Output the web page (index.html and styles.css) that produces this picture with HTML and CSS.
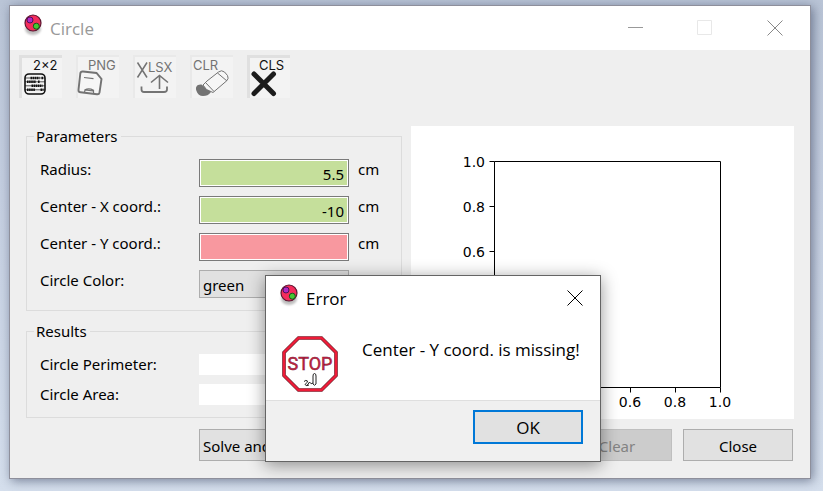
FILE: index.html
```
<!DOCTYPE html>
<html lang="en">
<head>
<meta charset="utf-8">
<title>Circle</title>
<link rel="stylesheet" href="styles.css">
</head>
<body>
<svg class="defs" aria-hidden="true">
  <symbol id="ball" viewBox="0 0 20 24">
    <ellipse class="ball-shadow" cx="10" cy="15" rx="8" ry="6"/>
    <circle cx="10" cy="9" r="8" fill="#f52c5c" stroke="#5c1630" stroke-width="1.2"/>
    <circle cx="7" cy="6" r="3" fill="#b228c4" stroke="#4a1258"/>
    <circle cx="13.300" cy="12.200" r="3" fill="#46c832" stroke="#17551a"/>
  </symbol>
  <symbol id="cross" viewBox="0 0 16 16">
    <path d="M.5.5l15 15M15.500.500l-15 15" fill="none" stroke="currentColor"/>
  </symbol>
</svg>
<main class="window">
  <header class="titlebar">
    <svg class="ball"><use href="#ball"/></svg>
    <h1 class="title">Circle</h1>
    <div class="controls">
      <button class="control" aria-label="Minimize"><svg class="glyph" viewBox="0 0 16 16"><path d="M1 7.500h15" stroke="#999" fill="none"/></svg></button>
      <button class="control" aria-label="Maximize" disabled><svg class="glyph" viewBox="0 0 16 16"><path d="M.5.5h14v14H.5z" stroke="#e8e8e8" fill="none"/></svg></button>
      <button class="control" aria-label="Close window"><svg class="glyph"><use href="#cross"/></svg></button>
    </div>
  </header>

  <nav class="toolbar">
    <button class="tool" aria-label="Solve">
      <svg viewBox="0 0 43 43">
        <text x="14" y="15" class="tool-text">2×2</text>
        <rect x="6" y="19" width="20" height="20" rx="4" fill="none" stroke="#111" stroke-width="1.6"/>
        <path d="M6 23h20M6 26.800h20M6 30.800h20M6 34.800h20" stroke="#111" stroke-width=".7" fill="none"/>
        <path d="M11.500 23h9M22.500 23h2M8 26.800h9M19 26.800h2M12.500 30.800h11M8 34.800h8M21.500 34.800h3" stroke="#111" stroke-width="2.600" stroke-dasharray="1.600 .5" fill="none"/>
      </svg>
    </button>
    <button class="tool" aria-label="Save picture" disabled>
      <svg viewBox="0 0 43 43">
        <text x="12" y="15" class="tool-text">PNG</text>
        <path d="M7 16.500l13.500 1.500 5 6-2 13.500q-.4 2-2.500 1.800L4.500 37.300q-2.200-.3-2-2.500L4.300 18.500q.3-2.200 2.700-2z" fill="#f6f6f6" stroke="currentColor" stroke-width="1.900"/>
        <path d="M8 22.500l9.500 1.200M8.500 37.500l.5-2.800q4-2 8.500.5v3.300M9 35l8 .8" fill="none" stroke="currentColor" stroke-width="1.200"/>
      </svg>
    </button>
    <button class="tool" aria-label="Export spreadsheet" disabled>
      <svg viewBox="0 0 43 43">
        <text x="15" y="17" class="tool-text">LSX</text>
        <path d="M4.500 7.500l9.500 15M14 7.500l-9.500 15" fill="none" stroke="currentColor" stroke-width="1.500"/>
        <path d="M26.500 34V20.500M18 27.500l8.500-7 8.500 7" fill="none" stroke="currentColor" stroke-width="1.600"/>
        <path d="M8.500 31.500v3q0 2.500 2.500 2.500h20q3 0 3-2.500v-3" fill="none" stroke="currentColor" stroke-width="1.800"/>
      </svg>
    </button>
    <button class="tool" aria-label="Clear values" disabled>
      <svg viewBox="0 0 43 43">
        <text x="3" y="15" class="tool-text">CLR</text>
        <path d="M11.500 29.500C7 29 5 32 6.500 36c.8 3 3.500 5 6.500 5 3.500 0 5.500-1 8-4z" fill="currentColor"/>
        <path d="M17 26L28.500 17q3-2.500 6 0l3 3.500q1.600 3-.8 5.300L23 37.500l-6.500-3-3.500-4.500z" fill="#f6f6f6" stroke="currentColor"/>
        <path d="M15.500 27.500l8.500 9M27.500 18l9.500 8" fill="none" stroke="currentColor"/>
      </svg>
    </button>
    <button class="tool" aria-label="Close">
      <svg viewBox="0 0 43 43">
        <text x="12" y="15" class="tool-text">CLS</text>
        <path d="M7 19l19.500 19.500M26.500 19L7 38.500" fill="none" stroke="#1c1c1c" stroke-width="5" stroke-linecap="round"/>
      </svg>
    </button>
  </nav>

  <div class="content">
    <div class="forms">
      <fieldset class="group">
        <legend>Parameters</legend>
        <div class="rows">
          <label for="radius">Radius:</label><input id="radius" class="field" value="5.5"><span>cm</span>
          <label for="cx">Center - X coord.:</label><input id="cx" class="field" value="-10"><span>cm</span>
          <label for="cy">Center - Y coord.:</label><input id="cy" class="field field-missing"><span>cm</span>
          <label for="color">Circle Color:</label><select id="color" class="choice"><option>green</option></select><span></span>
        </div>
      </fieldset>
      <fieldset class="group">
        <legend>Results</legend>
        <div class="rows">
          <label for="perimeter">Circle Perimeter:</label><output id="perimeter" class="result"></output><span></span>
          <label for="area">Circle Area:</label><output id="area" class="result"></output><span></span>
        </div>
      </fieldset>
    </div>
    <svg class="chart" viewBox="0 0 383 293" role="img" aria-label="Empty plot">
      <path d="M83.500 35.500h226v226h-226zM78.500 35.500h5M78.500 80.500h5M78.500 125.500h5M78.500 171.500h5M78.500 216.500h5M78.500 261.500h5M83.500 261.500v5M128.500 261.500v5M173.500 261.500v5M219.500 261.500v5M264.500 261.500v5M309.500 261.500v5" fill="none" stroke="#000"/>
      <g text-anchor="end">
        <text x="74" y="41">1.0</text><text x="74" y="86">0.8</text><text x="74" y="131">0.6</text>
      </g>
      <g text-anchor="middle">
        <text x="219" y="281">0.6</text><text x="264" y="281">0.8</text><text x="309" y="281">1.0</text>
      </g>
    </svg>
  </div>

  <footer class="actions">
    <button class="button button-solve">Solve and</button>
    <button class="button button-clear" disabled>Clear</button>
    <button class="button">Close</button>
  </footer>

  <section class="dialog" role="dialog" aria-labelledby="dialog-title">
    <header class="dialog-bar">
      <svg class="ball"><use href="#ball"/></svg>
      <h2 class="title" id="dialog-title">Error</h2>
      <button class="dialog-close" aria-label="Close dialog"><svg class="glyph"><use href="#cross"/></svg></button>
    </header>
    <div class="dialog-body">
      <svg class="stop" viewBox="0 0 56 56" aria-hidden="true">
        <path d="M16.500 2h23L54 16.500v23L39.500 54h-23L2 39.500v-23z" fill="#fff" stroke="#6a2630" stroke-width="3.600"/>
        <path d="M16.500 2h23L54 16.500v23L39.500 54h-23L2 39.500v-23z" fill="none" stroke="#ee1c38" stroke-width="2.400"/>
        <text x="28" y="34" text-anchor="middle" class="stop-text">STOP</text>
        <path d="M31 48V40q0-2.500 1.500-2.500T34 40v8q-1.500 2.500-3 0zM31 47q-2 2-3.500-1-1.500 3-3 3.500M22 45.500q2-2 3.500-.5 0 1.500-2.500 3.500 1.500 2 4 .5" fill="none" stroke="#222"/>
      </svg>
      <p class="message">Center - Y coord. is missing!</p>
    </div>
    <footer class="dialog-footer"><button class="ok">OK</button></footer>
  </section>
</main>
</body>
</html>
```
FILE: styles.css
```
* { box-sizing: border-box; }

body {
  display: flex;
  min-height: 100vh;
  margin: 0;
  padding: 5px 12px 12px 9px;
  background: linear-gradient(#bac5d7, #c5cfe1 40%, #d5dfed);
  color: #000;
  font: 15px/20px "Noto Sans", sans-serif;
}

button, input, select { margin: 0; font: inherit; color: inherit; }

.defs { position: absolute; width: 0; height: 0; }

.window {
  position: relative;
  display: flex;
  flex: 1;
  flex-direction: column;
  border: 1px solid #8e8f9b;
  background: #efefef;
  box-shadow: 2px 2px 10px rgba(30, 40, 70, .5);
}

.titlebar {
  display: flex;
  align-items: center;
  height: 44px;
  padding-left: 13px;
  background: #fff;
}

.ball { width: 20px; height: 24px; margin-bottom: 4px; }
.ball-shadow { fill: #000; opacity: .25; filter: blur(1px); }

.title {
  margin: 0;
  padding: 2px 0 0 7px;
  font: 17px/24px "Open Sans", sans-serif;
}
.titlebar .title { color: #999; }

.controls { display: flex; margin-left: auto; }
.control {
  width: 70px;
  height: 44px;
  padding: 0;
  border: 0;
  background: none;
  color: #888;
}
.glyph { display: block; width: 16px; height: 16px; margin: 0 auto; }

.toolbar { display: flex; gap: 14px; padding: 5px 9px; }
.tool {
  width: 43px;
  height: 43px;
  padding: 0;
  border: 0;
  background: #f3f3f3;
  box-shadow: inset 3px 3px #e0e0e0;
  color: #111;
}
.tool:disabled { box-shadow: inset 2px 2px #e9e9e9; color: #737373; }
.tool svg { display: block; }
.tool-text { font: 13px Inter, sans-serif; fill: currentColor; }

.content {
  display: grid;
  grid-template-columns: 376fr 383fr;
  gap: 9px;
  padding: 23px 16px 0;
}
.forms { display: flex; flex-direction: column; gap: 10px; }

.group {
  min-width: 0;
  margin: 0;
  padding: 13px 13px 12px;
  border: 1px solid #dcdcdc;
}
.group legend { margin-left: -6px; padding: 0 3px 0 2px; }

.rows {
  display: grid;
  grid-template-columns: 1fr 150px 30px;
  align-items: start;
  gap: 9px;
}

.field {
  width: 100%;
  height: 28px;
  padding: 2px 4px 0;
  border: 1px solid #7a7a7a;
  background: #c5df9b;
  box-shadow: inset 0 0 0 1px #fff;
  text-align: right;
}
.field-missing { background: #f8989f; }

.choice {
  width: 100%;
  height: 28px;
  padding: 2px 3px 0;
  border: 1px solid #adadad;
  border-radius: 0;
  background: #e1e1e1;
  appearance: none;
}

.result { height: 21px; background: #fff; }

.chart { width: 100%; background: #fff; }
.chart text { font: 14px "DejaVu Sans", sans-serif; }

.actions { display: flex; gap: 11px; padding: 10px 17px 16px 189px; }
.button {
  width: 110px;
  height: 32px;
  padding: 2px 0 0;
  border: 1px solid #adadad;
  background: #e1e1e1;
}
.button-solve { padding-left: 3px; text-align: left; }
.button-clear { margin-left: auto; border-color: #bfbfbf; background: #ccc; color: #838383; }

.dialog {
  position: absolute;
  top: 269px;
  left: 255px;
  width: 336px;
  border: 1px solid #646464;
  background: #fff;
  box-shadow: 0 3px 16px rgba(0, 0, 0, .42);
  font: 17px/24px "Open Sans", sans-serif;
}
.dialog-bar { display: flex; align-items: center; height: 44px; padding: 0 17px 0 13px; }
.dialog-close { margin-left: auto; padding: 0; border: 0; background: none; }

.dialog-body { display: flex; gap: 24px; height: 80px; padding: 16px 0 8px 16px; }
.stop { width: 56px; height: 56px; }
.stop-text {
  font: 18px Roboto, sans-serif;
  fill: #d02040;
  stroke: #7a2038;
  stroke-width: .5px;
}
.message { margin: 2px 0 0; white-space: nowrap; }

.dialog-footer {
  display: flex;
  justify-content: flex-end;
  padding: 9px 17px 17px;
  border-top: 1px solid #dfdfdf;
  background: #f0f0f0;
}
.ok {
  width: 110px;
  height: 34px;
  padding: 2px 0 0;
  border: 2px solid #0078d7;
  background: #e1e1e1;
}
```
